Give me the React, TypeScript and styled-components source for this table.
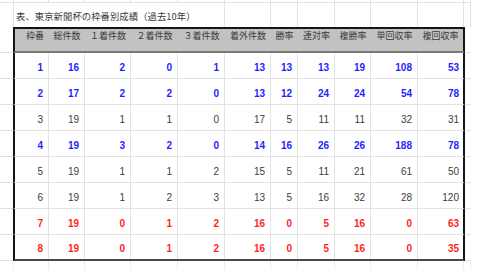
import React from "react";
import styled, { createGlobalStyle } from "styled-components";

type Tone = "blue" | "red" | "plain";

interface RowData {
  tone: Tone;
  values: number[];
}

// sheet columns (px) : A, B..L, M
const SHEET_COLS = [14, 35, 36, 46, 47, 47, 46, 27, 37, 36, 47, 46, 7];
// inner widths of the bordered table (B..L)
const TABLE_COLS = [34, 36, 46, 47, 47, 46, 27, 37, 36, 47, 45];

const HEADERS = [
  "枠番",
  "総件数",
  "１着件数",
  "２着件数",
  "３着件数",
  "着外件数",
  "勝率",
  "連対率",
  "複勝率",
  "単回収率",
  "複回収率",
];

const ROWS: RowData[] = [
  { tone: "blue", values: [1, 16, 2, 0, 1, 13, 13, 13, 19, 108, 53] },
  { tone: "blue", values: [2, 17, 2, 2, 0, 13, 12, 24, 24, 54, 78] },
  { tone: "plain", values: [3, 19, 1, 1, 0, 17, 5, 11, 11, 32, 31] },
  { tone: "blue", values: [4, 19, 3, 2, 0, 14, 16, 26, 26, 188, 78] },
  { tone: "plain", values: [5, 19, 1, 1, 2, 15, 5, 11, 21, 61, 50] },
  { tone: "plain", values: [6, 19, 1, 2, 3, 13, 5, 16, 32, 28, 120] },
  { tone: "red", values: [7, 19, 0, 1, 2, 16, 0, 5, 16, 0, 63] },
  { tone: "red", values: [8, 19, 0, 1, 2, 16, 0, 5, 16, 0, 35] },
];

const TONE_COLOR: Record<Tone, string> = {
  blue: "#1f1fff",
  red: "#ff1f1f",
  plain: "#3c3c3c",
};

const GRID = "#e2e2e2";
const px = (list: number[]) => list.map((w) => `${w}px`).join(" ");

const GlobalStyle = createGlobalStyle`
  body {
    margin: 0;
    background: #ffffff;
  }
`;

const Sheet = styled.div`
  width: 471px;
  display: flex;
  flex-direction: column;
  font-family: "Noto Sans CJK JP", "Liberation Sans", sans-serif;
  color: #3a3a3a;
`;

const SheetRow = styled.div<{ $h: number }>`
  display: grid;
  grid-template-columns: ${px(SHEET_COLS)};
  height: ${({ $h }) => $h}px;
`;

const SheetCell = styled.div<{ $bottom?: boolean; $faint?: boolean }>`
  box-sizing: border-box;
  border-right: 1px solid ${({ $faint }) => ($faint ? "#efefef" : GRID)};
  border-bottom: ${({ $bottom }) => ($bottom ? `1px solid ${GRID}` : "none")};
`;

const TitleCell = styled(SheetCell)`
  grid-column: 2 / 7;
  display: flex;
  align-items: center;
  padding-left: 2px;
  padding-top: 1px;
  font-size: 9.3px;
  white-space: nowrap;
  letter-spacing: 0.1px;
`;

const TableRow = styled.div<{ $h: number }>`
  display: grid;
  grid-template-columns: 13px 452px 6px;
  height: ${({ $h }) => $h}px;
`;

const Gutter = styled.div`
  box-sizing: border-box;
  border-bottom: 1px solid ${GRID};
`;

const Band = styled.div<{ $top?: boolean; $last?: boolean; $header?: boolean }>`
  box-sizing: border-box;
  display: grid;
  grid-template-columns: ${px(TABLE_COLS)};
  border-left: 2px solid #151515;
  border-right: 2px solid #151515;
  border-top: ${({ $top }) => ($top ? "2px solid #151515" : "none")};
  border-bottom: ${({ $header, $last }) =>
    $header ? "2px solid #7a7a7a" : $last ? "2px solid #4a4a4a" : `1px solid ${GRID}`};
  background: ${({ $header }) => ($header ? "#c2c2c2" : "#ffffff")};
`;

const HeadCell = styled.div<{ $lead?: boolean }>`
  display: flex;
  justify-content: center;
  align-items: flex-start;
  padding-top: 1px;
  padding-left: ${({ $lead }) => ($lead ? "6px" : "0")};
  font-size: 9px;
  line-height: 12px;
  white-space: nowrap;
  color: #3a3a3a;
`;

const NumCell = styled.div<{ $tone: Tone; $end?: boolean }>`
  box-sizing: border-box;
  display: flex;
  justify-content: flex-end;
  align-items: center;
  padding-right: ${({ $end }) => ($end ? "4px" : "5px")};
  padding-top: 3px;
  border-right: ${({ $end }) => ($end ? "none" : `1px solid ${GRID}`)};
  font-family: "Liberation Sans", Arial, sans-serif;
  font-size: 10px;
  font-weight: ${({ $tone }) => ($tone === "plain" ? 400 : 700)};
  color: ${({ $tone }) => TONE_COLOR[$tone]};
`;

const App: React.FC = () => {
  return (
    <>
      <GlobalStyle />
      <Sheet>
        <SheetRow $h={3}>
          {SHEET_COLS.map((_, i) => (
            <SheetCell key={i} $bottom />
          ))}
        </SheetRow>

        <SheetRow $h={24}>
          <SheetCell />
          <TitleCell>表、東京新聞杯の枠番別成績（過去10年）</TitleCell>
          {SHEET_COLS.slice(6).map((_, i) => (
            <SheetCell key={i} />
          ))}
        </SheetRow>

        <TableRow $h={26}>
          <Gutter />
          <Band $top $header>
            {HEADERS.map((h, i) => (
              <HeadCell key={h} $lead={i === 0}>
                {h}
              </HeadCell>
            ))}
          </Band>
          <Gutter />
        </TableRow>

        {ROWS.map((row, r) => (
          <TableRow key={r} $h={26}>
            <Gutter />
            <Band $last={r === ROWS.length - 1}>
              {row.values.map((v, i) => (
                <NumCell key={i} $tone={row.tone} $end={i === row.values.length - 1}>
                  {v}
                </NumCell>
              ))}
            </Band>
            <Gutter />
          </TableRow>
        ))}

        <SheetRow $h={9}>
          {SHEET_COLS.map((_, i) => (
            <SheetCell key={i} $faint />
          ))}
        </SheetRow>
      </Sheet>
    </>
  );
};

export default App;
